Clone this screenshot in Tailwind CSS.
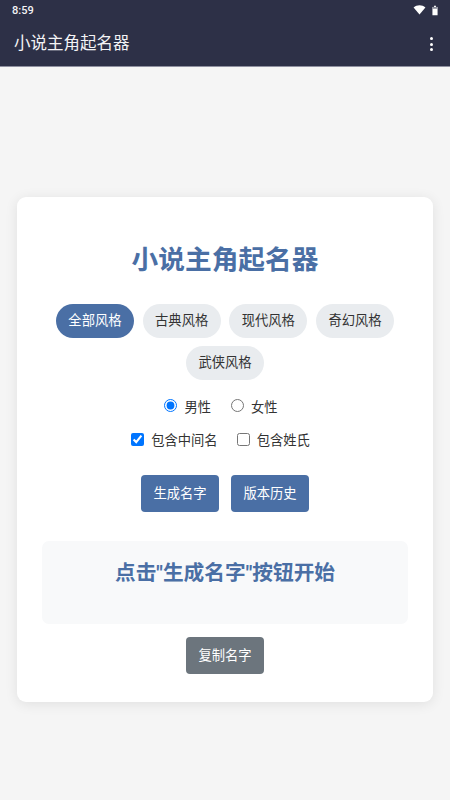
<!DOCTYPE html>
<html lang="zh-CN">
<head>
	<meta charset="UTF-8" />
	<meta name="viewport" content="width=device-width, initial-scale=1.0" />
	<title>小说主角起名器</title>
	<script src="https://cdn.jsdelivr.net/npm/@tailwindcss/browser@4"></script>
</head>
<body class="w-[450px] h-[800px] overflow-hidden bg-[#f5f5f5] font-['Roboto','Noto_Sans_CJK_SC',sans-serif]">
	<!-- status bar -->
	<div class="h-[22px] bg-[#2d3047] flex items-center justify-between pl-3 pr-[12px]">
		<span class="text-[11px] font-medium text-[#f3f3f5]">8:59</span>
		<div class="flex items-center gap-[6px] -translate-y-[1px]">
			<svg width="13" height="10" viewBox="0 0 14 11"><path d="M0.5 2.8C4.2 -0.4 9.8 -0.4 13.5 2.8L7 10.5Z" fill="#fff"/></svg>
			<svg width="6" height="11" viewBox="0 0 7 12"><path d="M2.3 0.5H4.7V1.8H6.5V11.5H0.5V1.8H2.3Z" fill="#fff"/><path d="M0.5 1.8H6.5V4H0.5Z" fill="#8a8c9a"/></svg>
		</div>
	</div>
	<!-- app bar -->
	<div class="h-[45px] bg-[#2d3047] border-b border-[#8f90a0] flex items-center justify-between pl-[14px] pr-[17px]">
		<span class="text-[16.5px] text-[#f3f3f5]">小说主角起名器</span>
		<div class="flex flex-col gap-[2.5px]">
			<span class="w-[3px] h-[3px] rounded-full bg-white"></span>
			<span class="w-[3px] h-[3px] rounded-full bg-white"></span>
			<span class="w-[3px] h-[3px] rounded-full bg-white"></span>
		</div>
	</div>

	<div class="px-[17px] pt-[130px]">
		<div class="h-[505px] bg-white rounded-[9px] shadow-[0_2px_13px_rgba(0,0,0,0.09)] px-[25px] pt-[44px]">
			<h1 class="text-center text-[26.7px] leading-[38px] font-bold text-[#4a6fa5]">小说主角起名器</h1>

			<div class="mt-[25px] flex flex-wrap justify-center gap-x-[8.4px] gap-y-[8px] text-[13.3px]">
				<button class="w-[78.3px] h-[34px] rounded-full bg-[#4a6fa5] text-white">全部风格</button>
				<button class="w-[78.3px] h-[34px] rounded-full bg-[#e9ecef] text-[#333]">古典风格</button>
				<button class="w-[78.3px] h-[34px] rounded-full bg-[#e9ecef] text-[#333]">现代风格</button>
				<button class="w-[78.3px] h-[34px] rounded-full bg-[#e9ecef] text-[#333]">奇幻风格</button>
				<button class="w-[78.3px] h-[34px] rounded-full bg-[#e9ecef] text-[#333]">武侠风格</button>
			</div>

			<div class="mt-[17px] h-[20px] pr-[8px] flex justify-center items-center gap-[20px] text-[13.3px] text-[#333]">
				<label class="flex items-center gap-[7px]"><input type="radio" name="gender" checked class="w-[13px] h-[13px] m-0 -translate-y-[2px]" /><span class="translate-y-[1px]">男性</span></label>
				<label class="flex items-center gap-[7px]"><input type="radio" name="gender" class="w-[13px] h-[13px] m-0 -translate-y-[2px]" /><span class="translate-y-[1px]">女性</span></label>
			</div>

			<div class="mt-[14px] h-[20px] pr-[9px] flex justify-center items-center gap-[19px] text-[13.3px] text-[#333]">
				<label class="flex items-center gap-[7px]"><input type="checkbox" checked class="w-[13px] h-[13px] m-0 -translate-y-[2px]" /><span>包含中间名</span></label>
				<label class="flex items-center gap-[7px]"><input type="checkbox" class="w-[13px] h-[13px] m-0 -translate-y-[2px]" /><span>包含姓氏</span></label>
			</div>

			<div class="mt-[24px] flex justify-center gap-[12px] text-[13.3px] text-white">
				<button class="w-[78px] h-[37px] rounded-[4px] bg-[#4a6fa5]">生成名字</button>
				<button class="w-[78px] h-[37px] rounded-[4px] bg-[#4a6fa5]">版本历史</button>
			</div>

			<div class="mt-[29px] h-[83px] rounded-[7px] bg-[#f8f9fa] pt-[17px] text-center text-[20.7px] leading-[30px] font-bold text-[#4a6fa5]">点击"生成名字"按钮开始</div>

			<div class="mt-[13px] flex justify-center">
				<button class="w-[78px] h-[37px] rounded-[4px] bg-[#6c757d] text-[13.3px] text-white">复制名字</button>
			</div>
		</div>
	</div>
</body>
</html>
